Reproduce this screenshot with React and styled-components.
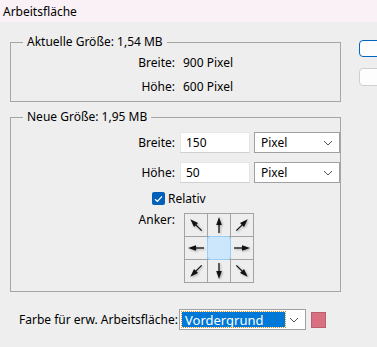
import styled, { createGlobalStyle } from "styled-components";

const GlobalStyle = createGlobalStyle`
  html, body {
    margin: 0;
    padding: 0;
    background: #eeeeee;
  }
  body {
    font-family: "Noto Sans", "Open Sans", sans-serif;
    font-size: 12px;
    color: #000;
  }
`;

const arrows = [-45, 0, 45, -90, null, 90, -135, 180, 135];

function Arrow({ angle }) {
  return (
    <svg width="22" height="22" viewBox="0 0 22 22">
      <g transform={`rotate(${angle} 11 11)`}>
        <line x1="11" y1="19" x2="11" y2="9" stroke="#111" strokeWidth="1.3" />
        <polygon points="11,3 8.2,11 13.8,11" fill="#111" />
      </g>
    </svg>
  );
}

function App() {
  return (
    <>
      <GlobalStyle />
      <StWindow>
        <StTitleBar>Arbeitsfläche</StTitleBar>
        <StBody>
          <StLeftCol>
            <StFieldset>
              <StLegend>Aktuelle Größe: 1,54 MB</StLegend>
              <StInfoRow>
                <StLabel>Breite:</StLabel>
                <StValue>900 Pixel</StValue>
              </StInfoRow>
              <StInfoRow>
                <StLabel>Höhe:</StLabel>
                <StValue>600 Pixel</StValue>
              </StInfoRow>
            </StFieldset>

            <StFieldset $second>
              <StLegend>Neue Größe: 1,95 MB</StLegend>
              <StInputRow>
                <StLabel>Breite:</StLabel>
                <StInput>150</StInput>
                <StSelect $width={86}>
                  <span>Pixel</span>
                  <Chevron />
                </StSelect>
              </StInputRow>
              <StInputRow $gap={9}>
                <StLabel>Höhe:</StLabel>
                <StInput>50</StInput>
                <StSelect $width={86}>
                  <span>Pixel</span>
                  <Chevron />
                </StSelect>
              </StInputRow>
              <StCheckRow>
                <StCheckbox>
                  <svg width="9" height="8" viewBox="0 0 9 8">
                    <polyline
                      points="1,4.2 3.4,6.4 8,1.4"
                      fill="none"
                      stroke="#fff"
                      strokeWidth="1.3"
                    />
                  </svg>
                </StCheckbox>
                Relativ
              </StCheckRow>
              <StAnchorRow>
                <StLabel>Anker:</StLabel>
                <StAnchorGrid>
                  {arrows.map((a, i) => (
                    <StAnchorCell key={i} $active={a === null}>
                      {a !== null && <Arrow angle={a} />}
                    </StAnchorCell>
                  ))}
                </StAnchorGrid>
              </StAnchorRow>
            </StFieldset>

            <StColorRow>
              <span>Farbe für erw. Arbeitsfläche:</span>
              <StSelect $width={127}>
                <StSelected>Vordergrund</StSelected>
                <Chevron />
              </StSelect>
              <StSwatch />
            </StColorRow>
          </StLeftCol>

          <StRightCol>
            <StButton $primary />
            <StButton />
          </StRightCol>
        </StBody>
      </StWindow>
    </>
  );
}

function Chevron() {
  return (
    <StChevron width="10" height="6" viewBox="0 0 10 6">
      <polyline points="1,1 5,5 9,1" fill="none" stroke="#555" strokeWidth="1" />
    </StChevron>
  );
}

export default App;

const StWindow = styled.div`
  width: 377px;
  height: 347px;
  overflow: hidden;
  display: flex;
  flex-direction: column;
`;

const StTitleBar = styled.div`
  height: 22px;
  background: #f9f1f5;
  padding-left: 3px;
  display: flex;
  align-items: center;
`;

const StBody = styled.div`
  display: flex;
  padding: 12px 0 0 10px;
`;

const StLeftCol = styled.div`
  width: 337px;
  display: flex;
  flex-direction: column;
`;

const StRightCol = styled.div`
  display: flex;
  flex-direction: column;
  gap: 11px;
  margin-left: 18px;
  padding-top: 6px;
`;

const StButton = styled.div`
  width: 75px;
  height: ${(p) => (p.$primary ? "15px" : "16px")};
  background: #fdfdfd;
  border: ${(p) => (p.$primary ? "1.5px solid #0067c0" : "1px solid #cfcfcf")};
  border-radius: 4px;
`;

const StFieldset = styled.fieldset`
  margin: ${(p) => (p.$second ? "7px 0 0" : "0")};
  padding: ${(p) => (p.$second ? "0 0 8px" : "0 0 3px")};
  border: 1px solid #a6a6a6;
  min-width: 0;
`;

const StLegend = styled.legend`
  margin-left: 12px;
  padding: 0 4px;
  line-height: 16px;
`;

const StLabel = styled.span`
  width: 164px;
  text-align: right;
  flex-shrink: 0;
`;

const StInfoRow = styled.div`
  display: flex;
  align-items: center;
  height: 24px;

  & ${StLabel} {
    margin-right: 8px;
  }
`;

const StValue = styled.span``;

const StInputRow = styled.div`
  display: flex;
  align-items: center;
  height: 21px;
  margin-top: ${(p) => p.$gap ?? 7}px;

  & ${StLabel} {
    margin-right: 5px;
  }
`;

const StInput = styled.div`
  width: 63px;
  height: 19px;
  padding-left: 5px;
  background: #fff;
  border: 1px solid #e6e6e6;
  border-bottom-color: #d0d0d0;
  display: flex;
  align-items: center;
  margin-right: 4px;
`;

const StSelect = styled.div`
  width: ${(p) => p.$width - 2}px;
  height: 19px;
  background: #fff;
  border: 1px solid #a0a0a0;
  display: flex;
  align-items: center;

  & > span {
    padding-left: 6px;
  }
`;

const StChevron = styled.svg`
  margin-left: auto;
  margin-right: 6px;
`;

const StSelected = styled.div`
  width: 100px;
  height: 15px;
  margin-left: 2px;
  padding-left: 3px;
  background: #0078d7;
  color: #fff;
  outline: 1px dotted #d98b2b;
  display: flex;
  align-items: center;
  font-size: 13px;
`;

const StCheckRow = styled.div`
  display: flex;
  align-items: center;
  gap: 3px;
  margin: 9px 0 0 141px;
  height: 13px;
`;

const StCheckbox = styled.div`
  width: 13px;
  height: 13px;
  border-radius: 2px;
  background: #005fb8;
  display: flex;
  align-items: center;
  justify-content: center;
`;

const StAnchorRow = styled.div`
  display: flex;
  align-items: flex-start;
  margin-top: 8px;

  & ${StLabel} {
    margin-right: 9px;
    line-height: 14px;
  }
`;

const StAnchorGrid = styled.div`
  display: grid;
  grid-template-columns: repeat(3, 22px);
  grid-template-rows: repeat(3, 22px);
  gap: 1px;
  padding: 1px;
  background: #a3a3a3;
`;

const StAnchorCell = styled.div`
  background: ${(p) => (p.$active ? "#cce6fb" : "#eeeeee")};
  display: flex;
  align-items: center;
  justify-content: center;
  ${(p) =>
    p.$active &&
    `
    position: relative;
    z-index: 1;
    margin: -1px;
    border: 1px solid #98cff7;
    border-radius: 3px;
  `}

  & svg {
    filter: drop-shadow(1px 1px 0.8px rgba(0, 0, 0, 0.3));
  }
`;

const StColorRow = styled.div`
  display: flex;
  align-items: center;
  margin-top: 17px;
  padding-left: 9px;

  & > span {
    width: 160px;
  }
`;

const StSwatch = styled.div`
  width: 13px;
  height: 14px;
  margin-left: 5px;
  background: #d9707f;
  border: 1px solid #b85f6c;
`;
